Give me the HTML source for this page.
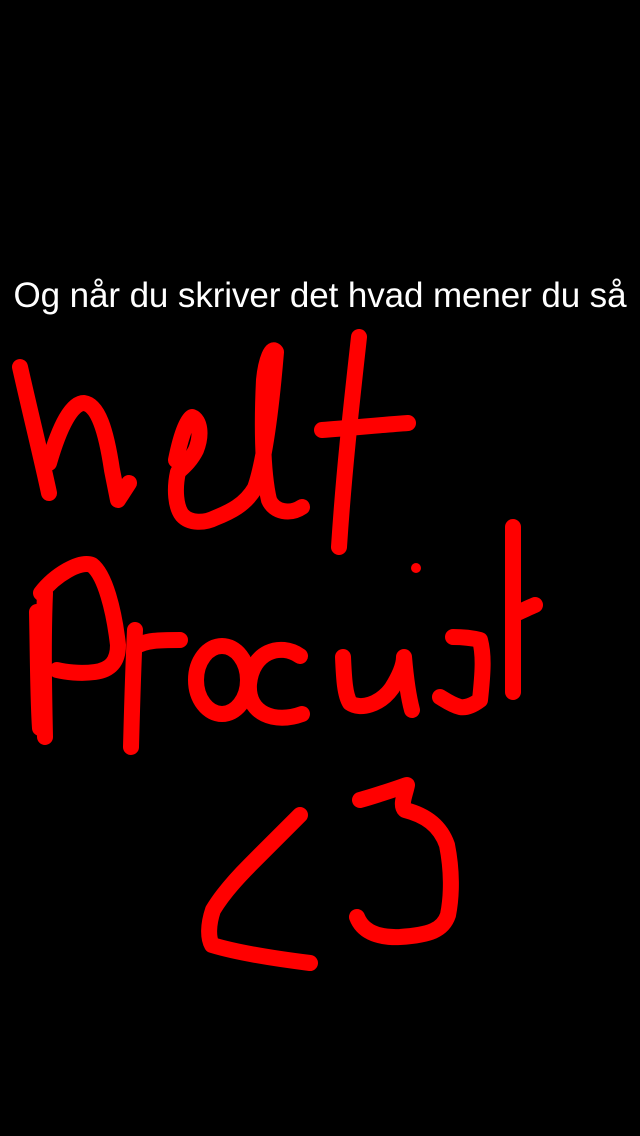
<!DOCTYPE html>
<html><head><meta charset="utf-8"><style>
html,body{margin:0;padding:0;background:#000;}
body{width:640px;height:1136px;position:relative;overflow:hidden;}
.cap{position:absolute;left:0;top:276px;width:640px;text-align:center;color:#fff;font-family:"Liberation Sans",sans-serif;font-size:35px;line-height:40px;white-space:nowrap;letter-spacing:-0.1px;}
svg{position:absolute;left:0;top:0;}
</style></head><body>
<div class="cap">Og når du skriver det hvad mener du så</div>
<svg width="640" height="1136" viewBox="0 0 640 1136" fill="none" stroke="#f00" stroke-width="16" stroke-linecap="round" stroke-linejoin="round">
<path d="M20,367 C32,420 42,460 49,493"/>
<path d="M49,463 C60,425 72,403 84,403 C98,405 106,430 112,470 L118,500 L129,483"/>
<path d="M176,460 C180,440 186,420 192,417 C200,420 202,435 196,450 C190,462 182,468 178,472 C174,490 176,507 182,515 C190,524 205,523 215,518 C230,512 245,505 255,488 C265,460 272,400 276,352 C272,345 266,360 264,380 C262,420 262,470 269,500 C274,512 290,515 302,507"/>
<path d="M359,337 C352,400 344,470 339,547"/>
<path d="M322,430 C350,428 380,425 408,423"/>
<path d="M41,593 C55,575 80,560 92,565 C105,575 114,610 118,645 C118,662 110,670 95,672 C80,674 65,672 57,670"/>
<path d="M45,593 C43,640 44,690 45,737"/>
<path d="M37,612 C38,660 38,700 40,728"/>
<path d="M135,630 C133,670 132,710 131,747"/>
<path d="M135,647 C145,640 160,640 180,640"/>
<ellipse cx="222" cy="680" rx="26" ry="34"/>
<path d="M300,656 C280,642 252,652 249,684 C247,714 275,724 302,714"/>
<path d="M343,657 C344,680 345,695 350,703 C360,710 380,705 392,688 C400,675 404,665 404,657 C406,680 408,695 412,710"/>
<circle cx="416" cy="568" r="5" fill="#f00" stroke="none"/>
<path d="M453,637 C462,637 472,638 480,640 C484,655 483,672 480,700 C472,706 465,708 460,707 C452,705 445,700 440,697"/>
<path d="M513,527 L513,692"/>
<path d="M517,613 C524,610 530,607 535,605"/>
<path d="M300,815 C285,830 270,845 250,865 C235,880 222,895 213,910 C208,925 208,938 212,945 C235,952 270,958 310,963"/>
<path d="M360,800 C375,796 392,790 407,785 C405,795 400,805 405,810 C425,815 440,825 447,845 C452,870 452,895 448,915 C443,930 430,935 400,937 C375,938 362,930 357,917"/>
</svg>
</body></html>
